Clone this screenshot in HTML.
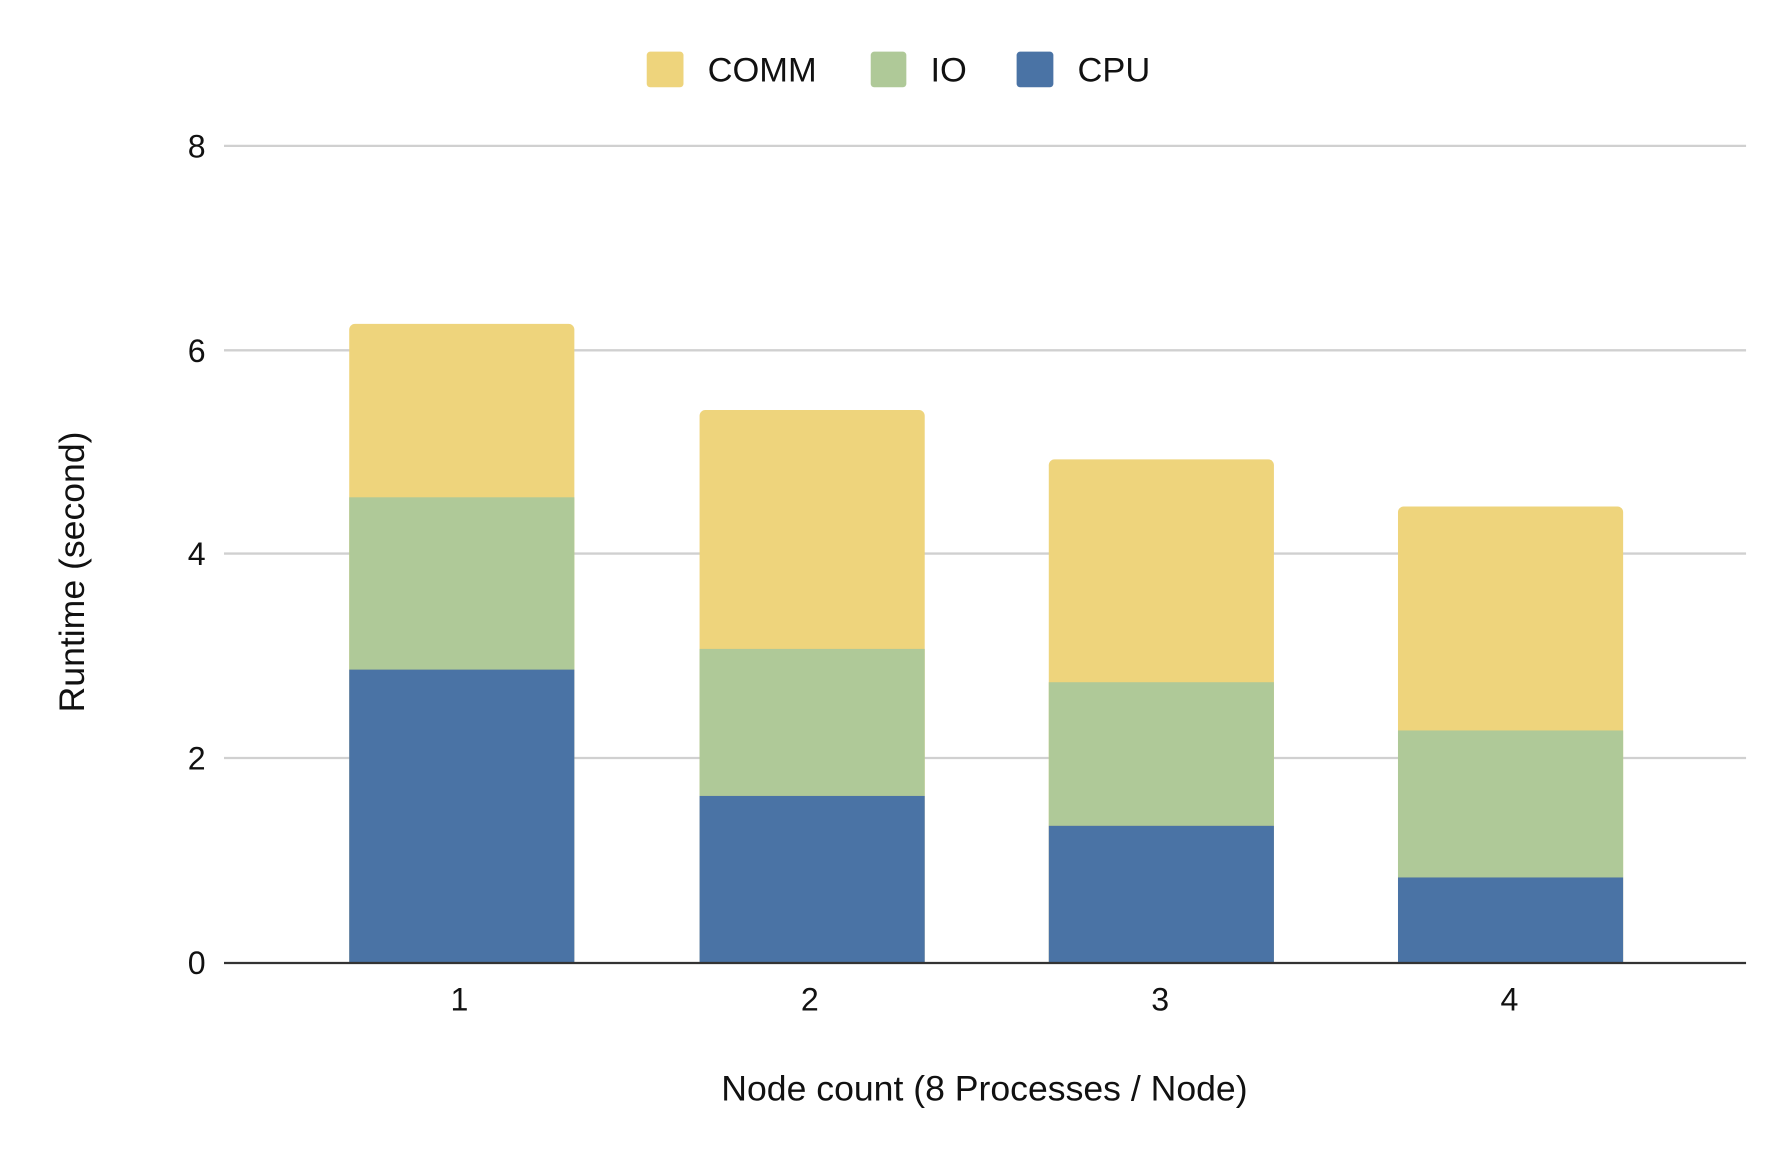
<!DOCTYPE html>
<html><head><style>html,body{margin:0;padding:0;background:#fff;}svg{display:block}</style></head>
<body>
<svg width="1792" height="1160" viewBox="0 0 1560 1010" preserveAspectRatio="none" xmlns="http://www.w3.org/2000/svg" font-family="Liberation Sans, Arial, sans-serif">
<rect width="1560" height="1010" fill="#fff"/>
<g stroke="#d0d0d0" stroke-width="2">
<line x1="195" y1="127" x2="1520" y2="127"/>
<line x1="195" y1="305" x2="1520" y2="305"/>
<line x1="195" y1="482" x2="1520" y2="482"/>
<line x1="195" y1="660" x2="1520" y2="660"/>
</g>
<g>
<path d="M304 838V287a5 5 0 0 1 5-5h186a5 5 0 0 1 5 5V838z" fill="#eed47c"/>
<rect x="304" y="433" width="196" height="150" fill="#afc998"/>
<rect x="304" y="583" width="196" height="255" fill="#4a73a5"/>
<path d="M609 838V362a5 5 0 0 1 5-5h186a5 5 0 0 1 5 5V838z" fill="#eed47c"/>
<rect x="609" y="565" width="196" height="128" fill="#afc998"/>
<rect x="609" y="693" width="196" height="145" fill="#4a73a5"/>
<path d="M913 838V405a5 5 0 0 1 5-5h186a5 5 0 0 1 5 5V838z" fill="#eed47c"/>
<rect x="913" y="594" width="196" height="125" fill="#afc998"/>
<rect x="913" y="719" width="196" height="119" fill="#4a73a5"/>
<path d="M1217 838V446a5 5 0 0 1 5-5h186a5 5 0 0 1 5 5V838z" fill="#eed47c"/>
<rect x="1217" y="636" width="196" height="128" fill="#afc998"/>
<rect x="1217" y="764" width="196" height="74" fill="#4a73a5"/>
</g>
<line x1="195" y1="838.5" x2="1520" y2="838.5" stroke="#333" stroke-width="2"/>
<g font-size="28" fill="#111" text-anchor="end">
<text x="179" y="137">8</text>
<text x="179" y="315">6</text>
<text x="179" y="492">4</text>
<text x="179" y="670">2</text>
<text x="179" y="848">0</text>
</g>
<g font-size="28" fill="#111" text-anchor="middle">
<text x="400" y="880">1</text>
<text x="705" y="880">2</text>
<text x="1010" y="880">3</text>
<text x="1314" y="880">4</text>
</g>
<g font-size="31" fill="#111" text-anchor="middle">
<text x="857" y="958">Node count (8 Processes / Node)</text>
<text transform="translate(73,498) rotate(-90)">Runtime (second)</text>
</g>
<rect x="563" y="45" width="32" height="31" rx="3" fill="#eed47c"/>
<rect x="758" y="45" width="31" height="31" rx="3" fill="#afc998"/>
<rect x="885" y="45" width="32" height="31" rx="3" fill="#4a73a5"/>
<g font-size="30" fill="#111">
<text x="616" y="71">COMM</text>
<text x="810" y="71">IO</text>
<text x="938" y="71">CPU</text>
</g>
</svg>
</body></html>
